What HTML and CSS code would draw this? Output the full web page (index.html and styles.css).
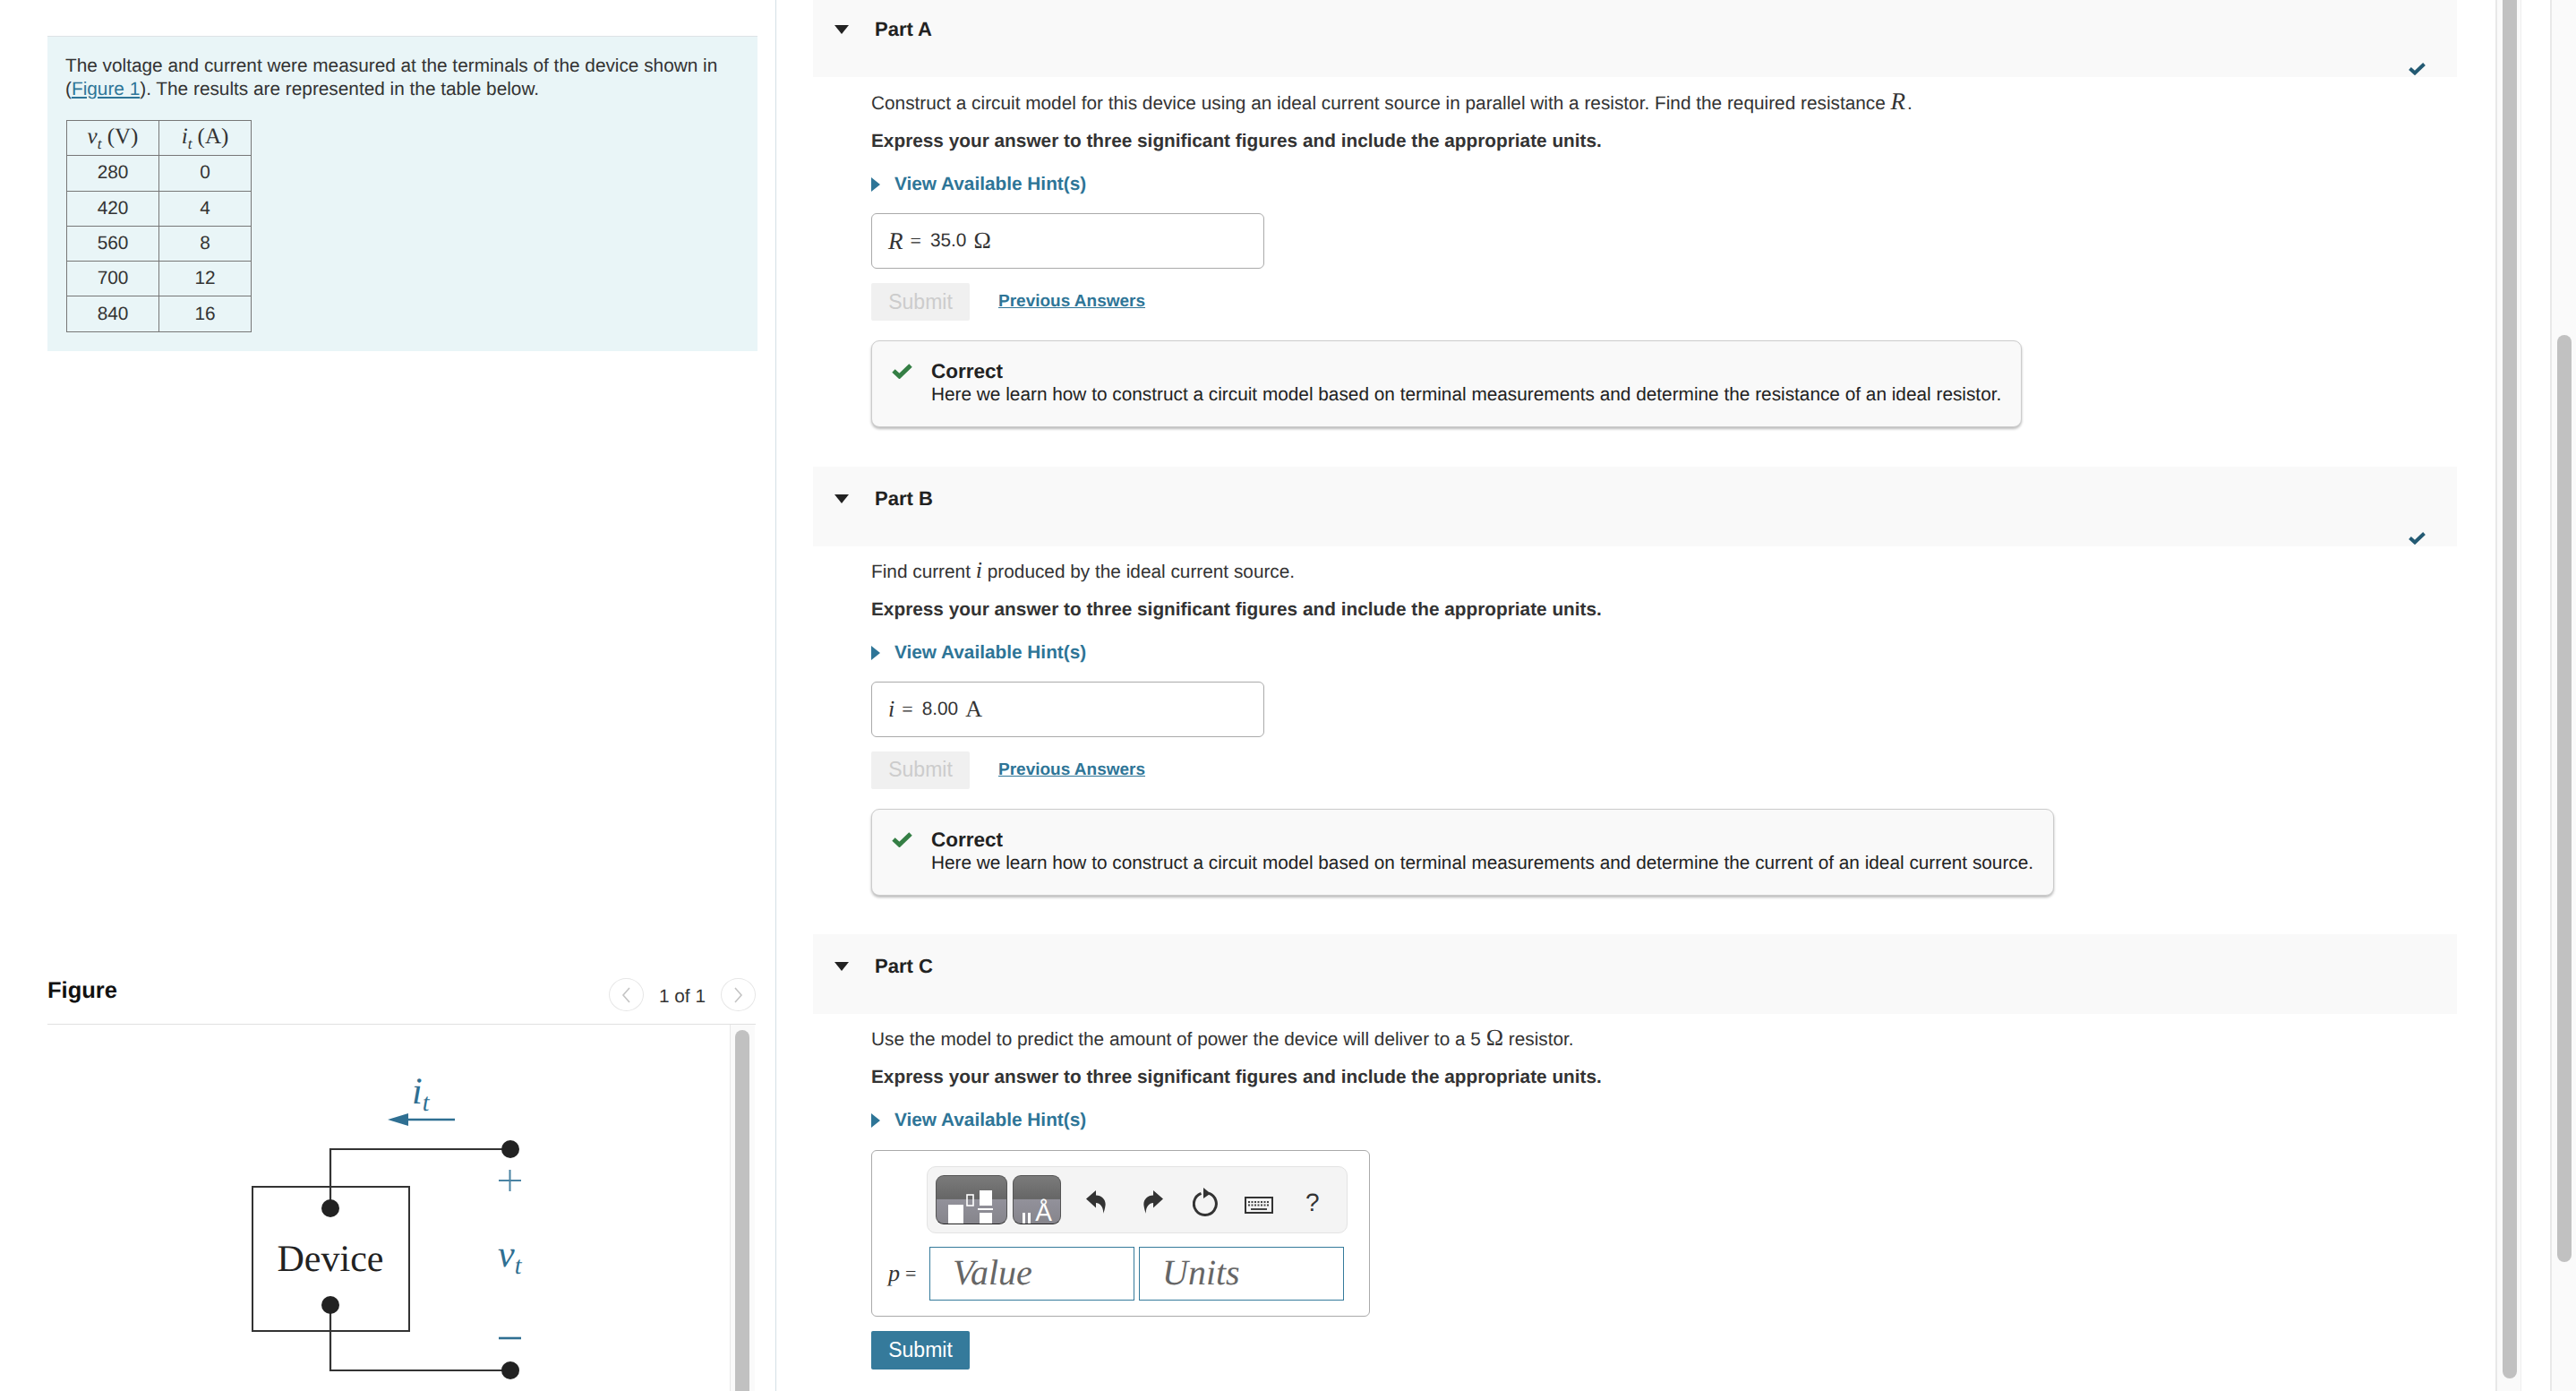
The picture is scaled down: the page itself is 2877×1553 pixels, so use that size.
FILE: index.html
```html
<!DOCTYPE html>
<html lang="en">
<head>
<meta charset="utf-8">
<title>Part A, B, C</title>
<link rel="stylesheet" href="styles.css">
</head>
<body>
<div class="page">
  <aside class="left">
    <section class="intro">
      <p class="intro-text">The voltage and current were measured at the terminals of the device shown in (<a class="link" href="#">Figure 1</a>). The results are represented in the table below.</p>
      <table class="data">
        <tr><th><i>v<sub>t</sub></i> (V)</th><th><i>i<sub>t</sub></i> (A)</th></tr>
        <tr><td>280</td><td>0</td></tr>
        <tr><td>420</td><td>4</td></tr>
        <tr><td>560</td><td>8</td></tr>
        <tr><td>700</td><td>12</td></tr>
        <tr><td>840</td><td>16</td></tr>
      </table>
    </section>
    <header class="fig-head">
      <h2 class="fig-title">Figure</h2>
      <div class="pager">
        <span class="circle"><svg width="12" height="20" viewBox="0 0 12 20"><path d="M10 2 3 10l7 8" fill="none" stroke="#c4c4c4" stroke-width="1.6"/></svg></span>
        <span class="pager-text">1 of 1</span>
        <span class="circle"><svg width="12" height="20" viewBox="0 0 12 20"><path d="M2 2l7 8-7 8" fill="none" stroke="#c4c4c4" stroke-width="1.6"/></svg></span>
      </div>
    </header>
    <div class="fig-body">
      <div class="fig-canvas">
        <svg class="circuit" width="762" height="409" viewBox="0 0 762 409">
          <rect x="229" y="181" width="175" height="161" fill="none" stroke="#333" stroke-width="2"/>
          <path d="M517 139H316V205M316 313V386H517" fill="none" stroke="#333" stroke-width="2.2"/>
          <circle cx="517" cy="139" r="10" fill="#222"/>
          <circle cx="316" cy="205" r="10" fill="#222"/>
          <circle cx="316" cy="313" r="10" fill="#222"/>
          <circle cx="517" cy="386" r="10" fill="#222"/>
          <path d="M400 106H455" stroke="#2f6f92" stroke-width="2.5"/>
          <path d="M380 106 403 99V113Z" fill="#2f6f92"/>
          <path d="M504 174H529M516.500 162V186" stroke="#4a83a3" stroke-width="2"/>
          <path d="M504 350H529" stroke="#2f6f92" stroke-width="2.6"/>
          <text class="dev" x="316" y="275" text-anchor="middle">Device</text>
          <text class="sym" x="407" y="88">i<tspan class="sym-sub" dy="8">t</tspan></text>
          <text class="sym" x="503" y="270">v<tspan class="sym-sub" dy="8">t</tspan></text>
        </svg>
      </div>
      <div class="track track-fig"><div class="thumb thumb-fig"></div></div>
    </div>
  </aside>

  <main class="main">
    <section class="part part-a">
      <div class="bar">
        <span class="bar-title"><svg class="caret" width="16" height="10" viewBox="0 0 16 10"><path d="M0 0H16L8 10Z" fill="#222"/></svg>Part A</span>
        <svg class="done" width="19" height="15" viewBox="0 0 19 15"><path d="M1.500 7.500 7 12.500 17.500 2.500" fill="none" stroke="#235a73" stroke-width="4"/></svg>
      </div>
      <div class="part-body">
        <p class="prompt">Construct a circuit model for this device using an ideal current source in parallel with a resistor. Find the required resistance <i class="m m-big m-wide">R</i>.</p>
        <p class="prompt strong">Express your answer to three significant figures and include the appropriate units.</p>
        <a class="hint" href="#"><svg width="10" height="16" viewBox="0 0 10 16"><path d="M0 0 10 8 0 16Z" fill="#2e7597"/></svg>View Available Hint(s)</a>
        <div class="answer"><i class="m m-big">R</i><span class="m eq">=</span><span>35.0</span><span class="m unit">Ω</span></div>
        <div class="actions"><button class="btn btn-off">Submit</button><a class="prev" href="#">Previous Answers</a></div>
        <div class="feedback">
          <svg class="ok" width="23" height="18" viewBox="0 0 23 18"><path d="M2 9 8.500 15 21 3" fill="none" stroke="#357f45" stroke-width="5"/></svg>
          <div><div class="fb-title">Correct</div><div>Here we learn how to construct a circuit model based on terminal measurements and determine the resistance of an ideal resistor.</div></div>
        </div>
      </div>
    </section>

    <section class="part">
      <div class="bar">
        <span class="bar-title"><svg class="caret" width="16" height="10" viewBox="0 0 16 10"><path d="M0 0H16L8 10Z" fill="#222"/></svg>Part B</span>
        <svg class="done" width="19" height="15" viewBox="0 0 19 15"><path d="M1.500 7.500 7 12.500 17.500 2.500" fill="none" stroke="#235a73" stroke-width="4"/></svg>
      </div>
      <div class="part-body">
        <p class="prompt">Find current <i class="m">i</i> produced by the ideal current source.</p>
        <p class="prompt strong">Express your answer to three significant figures and include the appropriate units.</p>
        <a class="hint" href="#"><svg width="10" height="16" viewBox="0 0 10 16"><path d="M0 0 10 8 0 16Z" fill="#2e7597"/></svg>View Available Hint(s)</a>
        <div class="answer"><i class="m">i</i><span class="m eq">=</span><span>8.00</span><span class="m unit">A</span></div>
        <div class="actions"><button class="btn btn-off">Submit</button><a class="prev" href="#">Previous Answers</a></div>
        <div class="feedback">
          <svg class="ok" width="23" height="18" viewBox="0 0 23 18"><path d="M2 9 8.500 15 21 3" fill="none" stroke="#357f45" stroke-width="5"/></svg>
          <div><div class="fb-title">Correct</div><div>Here we learn how to construct a circuit model based on terminal measurements and determine the current of an ideal current source.</div></div>
        </div>
      </div>
    </section>

    <section class="part">
      <div class="bar">
        <span class="bar-title"><svg class="caret" width="16" height="10" viewBox="0 0 16 10"><path d="M0 0H16L8 10Z" fill="#222"/></svg>Part C</span>
      </div>
      <div class="part-body">
        <p class="prompt">Use the model to predict the amount of power the device will deliver to a 5 <span class="m">Ω</span> resistor.</p>
        <p class="prompt strong">Express your answer to three significant figures and include the appropriate units.</p>
        <a class="hint" href="#"><svg width="10" height="16" viewBox="0 0 10 16"><path d="M0 0 10 8 0 16Z" fill="#2e7597"/></svg>View Available Hint(s)</a>
        <div class="editor">
          <div class="toolbar">
            <span class="tool tool-wide">
              <svg width="80" height="55" viewBox="0 0 80 55"><g fill="#fff"><rect x="14" y="33" width="17" height="22"/><rect x="49" y="17" width="14" height="17"/><rect x="47" y="37" width="17" height="2"/><rect x="49" y="42" width="14" height="13"/></g><rect x="35" y="22" width="7" height="12" fill="none" stroke="#fff" stroke-width="1.600"/></svg>
            </span>
            <span class="tool tool-narrow"><span class="mu"></span><span class="angstrom">Å</span></span>
            <svg class="ic ic-undo" width="22" height="26" viewBox="0 0 22 26"><path d="M0 9.500 11 0V5.500C18 5.500 22.500 11 21.500 17 21 21 20 24 19 26 20 20 16 14 11 14V19.500Z" fill="#333"/></svg>
            <svg class="ic ic-redo" width="22" height="26" viewBox="0 0 22 26"><path d="M22 9.500 11 0V5.500C4 5.500-.5 11 .5 17 1 21 2 24 3 26 2 20 6 14 11 14V19.500Z" fill="#333"/></svg>
            <svg class="ic ic-reset" width="28" height="32" viewBox="0 0 28 32"><path d="M9.500 6.300A12.500 12.500 0 1 0 18 6.200" fill="none" stroke="#333" stroke-width="3"/><path d="M12 0 20 6.500 12 12Z" fill="#333"/></svg>
            <svg class="ic ic-keys" width="32" height="19" viewBox="0 0 32 19"><rect x="1" y="1" width="30" height="17" fill="none" stroke="#333" stroke-width="2"/><path d="M4 6H28M4 9.500H28" stroke="#444" stroke-width="2" stroke-dasharray="2 1.500"/><path d="M7 14H25" stroke="#444" stroke-width="2"/></svg>
            <span class="tool-help">?</span>
          </div>
          <div class="entry">
            <span class="entry-label"><i class="m">p</i><span class="m eq">=</span></span>
            <div class="field">Value</div>
            <div class="field">Units</div>
          </div>
        </div>
        <div class="actions"><button class="btn btn-on">Submit</button></div>
      </div>
    </section>
  </main>

  <div class="track track-main"><div class="thumb thumb-main"></div></div>
  <div class="gutter"></div>
  <div class="track track-page"><div class="thumb thumb-page"></div></div>
</div>
</body>
</html>
```
FILE: styles.css
```css
* { box-sizing: border-box; }
html, body { margin: 0; height: 100%; overflow: hidden; background: #fff; }
body { font-family: "Liberation Sans", Arial, sans-serif; font-size: 20.800px; line-height: 26px; color: #333; text-rendering: geometricPrecision; }
p { margin: 0; }
.page { display: flex; height: 1553px; overflow: hidden; }

/* Left column */
.left { width: 867px; height: 1553px; flex: none; display: flex; flex-direction: column; padding: 40px 20px 0 53px; border-right: 1px solid #d5e0e6; overflow: hidden; }
.intro { height: 352px; background: #e9f5f7; border-top: 1px solid #dde3e6; padding: 20px 22px 0 20px; flex: none; }
.intro-text { width: 750px; }
.link { color: #2e7597; text-decoration: underline; }
.data { border-collapse: collapse; margin: 21px 0 0 1px; }
.data th, .data td { border: 1px solid #777; height: 39.300px; width: 103px; padding: 0; text-align: center; font-weight: 400; font-size: 20.800px; }
.data th { font-family: "Liberation Serif", serif; font-size: 25px; line-height: 24px; padding-bottom: 3px; }
.data sub { font-size: 17px; line-height: 0; }
.fig-head { display: flex; justify-content: space-between; align-items: flex-start; height: 52px; margin-top: 700px; margin-right: 2px; border-bottom: 1px solid #e0e0e0; flex: none; }
.fig-title { margin: -1px 0 0; font-size: 25.500px; line-height: 30px; font-weight: 700; color: #111; }
.pager { display: flex; align-items: center; gap: 17px; }
.pager-text { padding-top: 4px; color: #333; }
.circle { width: 39px; height: 37px; border: 1px solid #e6e6e6; border-radius: 50%; display: flex; align-items: center; justify-content: center; }
.fig-body { flex: 1; min-height: 0; display: flex; margin-right: 3px; overflow: hidden; }
.fig-canvas { width: 762px; flex: none; }
.circuit { display: block; }
.dev { font: 42px "Liberation Serif", serif; fill: #222; }
.sym { font: italic 42px "Liberation Serif", serif; fill: #2f6f92; }
.sym-sub { font-size: 28px; }

/* Tracks */
.track { flex: none; background: #fafafa; border-left: 2px solid #e8e8e8; height: 1553px; overflow: hidden; }
.thumb { background: #c1c1c1; border-radius: 8px; width: 16px; }
.track-fig { width: 28px; padding: 6px 0 0 5px; border-left-width: 1px; height: 100%; }
.thumb-fig { height: 500px; }
.track-main { width: 29px; padding-left: 6px; border-right: 1px solid #eee; }
.thumb-main { height: 1549px; margin-top: -10px; }
.gutter { width: 32px; flex: none; }
.track-page { width: 29px; padding: 374px 0 0 6px; }
.thumb-page { height: 1035px; }

/* Right column */
.main { flex: 1; min-width: 0; height: 1553px; padding: 0 43px 0 41px; overflow: hidden; }
.part { margin-bottom: 43.700px; }
.part-a { margin-top: -3px; }
.bar { height: 89px; background: #f9f9f9; display: flex; justify-content: space-between; align-items: flex-end; padding: 0 35px 2px 24px; }
.bar-title { align-self: flex-start; display: flex; align-items: center; gap: 29px; padding-top: 23px; font-size: 22px; font-weight: 700; color: #222; }
.part-body { padding: 14px 0 0 65px; }
.prompt { margin-bottom: 16px; }
.strong { font-weight: 700; margin-bottom: 22px; }
.m { font-family: "Liberation Serif", serif; font-size: 26px; line-height: 1; }
.m-big { font-size: 27px; }
.m-wide { letter-spacing: 2px; }
.hint { display: flex; align-items: center; gap: 16px; color: #2e7597; font-weight: 700; text-decoration: none; }
.answer { width: 439px; height: 62px; margin-top: 19px; border: 1px solid #aaa; border-radius: 6px; display: flex; align-items: center; padding: 0 18px; gap: 10px; }
.eq { font-size: 22px; margin-left: -2px; }
.unit { margin-left: -2px; }
.actions { display: flex; align-items: center; gap: 32px; margin-top: 16px; }
.btn { width: 110px; height: 42px; border: 0; border-radius: 2px; padding: 0; font: 23px "Liberation Sans", Arial, sans-serif; }
.btn-off { background: #f0f0f0; color: #ccc; }
.btn-on { background: #357a9b; color: #fff; height: 43px; }
.prev { color: #2e7597; font-size: 19px; font-weight: 700; text-decoration: underline; }
.feedback { width: fit-content; margin-top: 22px; display: flex; gap: 21px; background: #f9f9f9; border: 1px solid #ccc; border-radius: 9px; padding: 21px 22px 22px 22px; box-shadow: 0 2px 3px #bbb; }
.ok { flex: none; margin-top: 3px; }
.fb-title { font-size: 22.500px; font-weight: 700; color: #222; }
.feedback > div { color: #222; }

/* Editor */
.editor { width: 557px; height: 186px; margin-top: 20px; border: 1px solid #aaa; border-radius: 6px; padding: 17px 0 0 61px; }
.toolbar { width: 470px; height: 75px; background: #f4f4f4; border: 1px solid #e3e3e3; border-radius: 10px; display: flex; align-items: center; padding-left: 9px; }
.tool { height: 55px; border-radius: 9px; border: 1px solid #555; border-bottom-color: #222; background: linear-gradient(#7b7b7b, #666 48%, #92919a 50%, #86858c); display: block; flex: none; }
.tool svg { display: block; margin: -1px; }
.tool-wide { width: 80px; margin-right: 6px; overflow: hidden; }
.tool-narrow { width: 54px; display: flex; align-items: flex-end; justify-content: flex-end; padding-right: 9px; gap: 5px; }
.mu { width: 9px; height: 12px; border-left: 3px solid #fff; border-right: 3px solid #fff; }
.angstrom { color: #fff; font-size: 28px; line-height: 28px; height: 26px; }
.ic { flex: none; margin-top: 5px; }
.ic-undo { margin-left: 28px; }
.ic-redo { margin-left: 42px; }
.ic-reset { margin-left: 33px; }
.ic-keys { margin: 12px 0 0 30px; }
.tool-help { margin: 6px 0 0 36px; font-size: 28px; color: #333; }
.entry { display: flex; gap: 5px; margin: 15px 0 0 -60px; align-items: center; }
.entry-label { width: 58px; padding-left: 17px; display: flex; gap: 8px; align-items: center; flex: none; }
.field { width: 229px; height: 60px; border: 1px solid #357a9b; font: italic 40px/56px "Liberation Serif", serif; color: #666; padding-left: 25px; }
```
